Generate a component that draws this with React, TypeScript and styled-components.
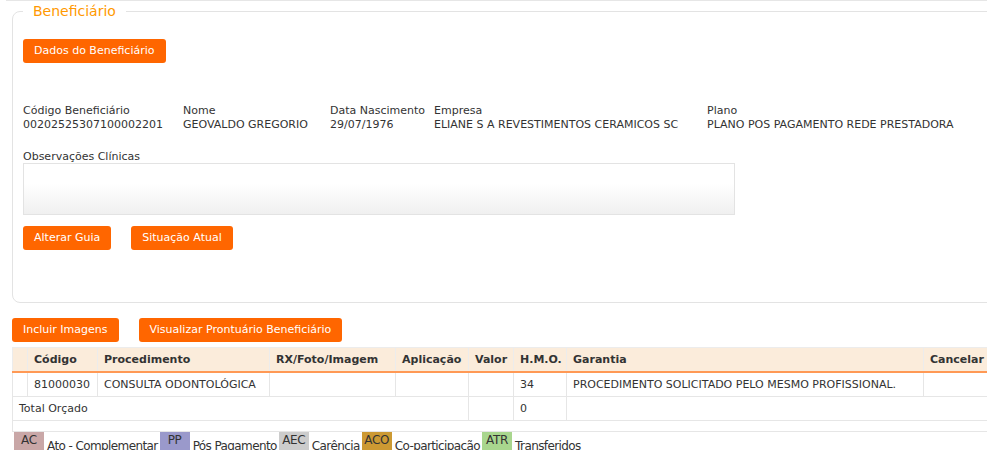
import { Fragment } from 'react'
import styled, { createGlobalStyle } from 'styled-components'

const GlobalStyle = createGlobalStyle`
  html, body {
    margin: 0;
    padding: 0;
    background: #ffffff;
    overflow: hidden;
  }
  body {
    font-family: 'DejaVu Sans', Verdana, sans-serif;
    font-size: 11px;
    color: #333333;
  }
`;

const Page = styled.div`
  width: 1010px;
`;

const PreviousPanel = styled.div`
  height: 0;
  margin-left: 6px;
  border-top: 1px solid #e6e6e6;
`;

const Fieldset = styled.fieldset`
  margin: 0 0 0 12px;
  padding: 18px 10px 52px 10px;
  border: 1px solid #e3e3e3;
  border-radius: 8px;
  min-width: 0;
`;

const Legend = styled.legend`
  padding: 0 10px;
  margin-left: 0;
  font-size: 14px;
  line-height: 20px;
  color: #ff9900;
`;

const Button = styled.button`
  height: 24px;
  padding: 0 11px;
  border: none;
  border-radius: 3px;
  background: #ff6600;
  color: #ffffff;
  font-family: 'DejaVu Sans', Verdana, sans-serif;
  font-size: 11px;
  line-height: 24px;
  cursor: pointer;
  white-space: nowrap;
`;

const ButtonRow = styled.div<{ $top?: number }>`
  display: flex;
  gap: 20px;
  margin-top: ${(p) => p.$top ?? 0}px;
`;

const InfoGrid = styled.div`
  display: grid;
  grid-template-columns: 160px 147px 104px 273px auto;
  margin-top: 41px;
  line-height: 14px;
`;

const InfoCell = styled.div`
  display: flex;
  flex-direction: column;
  white-space: nowrap;
`;

const ObsLabel = styled.div`
  margin-top: 18px;
  line-height: 13px;
`;

const ObsBox = styled.div`
  width: 710px;
  height: 50px;
  border: 1px solid #e3e3e3;
  background: linear-gradient(to bottom, #ffffff 40%, #f0f0f0 100%);
`;

const Section = styled.div`
  margin-left: 12px;
`;

const Table = styled.table`
  margin-top: 5px;
  width: 981px;
  border-collapse: collapse;
  table-layout: fixed;
`;

const HeadCell = styled.th`
  height: 23px;
  padding: 0 6px;
  text-align: left;
  font-weight: bold;
  color: #333333;
  background: #fbecdb;
  border: 1px solid #ececec;
  border-bottom: 2px solid #ff9955;
  white-space: nowrap;
  overflow: hidden;
`;

const Cell = styled.td<{ $short?: boolean }>`
  height: ${(p) => (p.$short ? 10 : 23)}px;
  padding: 0 6px;
  border: 1px solid #e6e6e6;
  white-space: nowrap;
  overflow: hidden;
`;

const LegendRow = styled.div`
  display: flex;
  align-items: flex-start;
  margin: 0 0 0 14px;
`;

const Tag = styled.span<{ $bg: string }>`
  width: 30px;
  height: 20px;
  line-height: 16px;
  text-align: center;
  font-size: 12px;
  letter-spacing: -0.3px;
  color: #333333;
  background: ${(p) => p.$bg};
`;

const TagText = styled.span`
  margin: 6px 2px 0 3px;
  font-size: 12px;
  letter-spacing: -0.6px;
  line-height: 16px;
`;

const info = [
  { label: 'Código Beneficiário', value: '00202525307100002201' },
  { label: 'Nome', value: 'GEOVALDO GREGORIO' },
  { label: 'Data Nascimento', value: '29/07/1976' },
  { label: 'Empresa', value: 'ELIANE S A REVESTIMENTOS CERAMICOS SC' },
  { label: 'Plano', value: 'PLANO POS PAGAMENTO REDE PRESTADORA' },
];

const columns = [
  { title: '', width: 15 },
  { title: 'Código', width: 70 },
  { title: 'Procedimento', width: 172 },
  { title: 'RX/Foto/Imagem', width: 126 },
  { title: 'Aplicação', width: 73 },
  { title: 'Valor', width: 45 },
  { title: 'H.M.O.', width: 53 },
  { title: 'Garantia', width: 357 },
  { title: 'Cancelar', width: 70 },
];

const tags = [
  { code: 'AC', text: 'Ato - Complementar', bg: '#c9a7a7' },
  { code: 'PP', text: 'Pós Pagamento', bg: '#9a99cb' },
  { code: 'AEC', text: 'Carência', bg: '#cccccc' },
  { code: 'ACO', text: 'Co-participação', bg: '#cc9933' },
  { code: 'ATR', text: 'Transferidos', bg: '#a9d68e' },
];

export default function App() {
  return (
    <Page>
      <GlobalStyle />
      <PreviousPanel />
      <Fieldset>
        <Legend>Beneficiário</Legend>
        <ButtonRow>
          <Button>Dados do Beneficiário</Button>
        </ButtonRow>
        <InfoGrid>
          {info.map((item) => (
            <InfoCell key={item.label}>
              <span>{item.label}</span>
              <span>{item.value}</span>
            </InfoCell>
          ))}
        </InfoGrid>
        <ObsLabel>Observações Clínicas</ObsLabel>
        <ObsBox />
        <ButtonRow $top={11}>
          <Button>Alterar Guia</Button>
          <Button>Situação Atual</Button>
        </ButtonRow>
      </Fieldset>
      <Section>
        <ButtonRow $top={15}>
          <Button>Incluir Imagens</Button>
          <Button>Visualizar Prontuário Beneficiário</Button>
        </ButtonRow>
        <Table>
          <colgroup>
            {columns.map((c, i) => (
              <col key={i} style={{ width: c.width }} />
            ))}
          </colgroup>
          <thead>
            <tr>
              {columns.map((c, i) => (
                <HeadCell key={i}>{c.title}</HeadCell>
              ))}
            </tr>
          </thead>
          <tbody>
            <tr>
              <Cell />
              <Cell>81000030</Cell>
              <Cell>CONSULTA ODONTOLÓGICA</Cell>
              <Cell />
              <Cell />
              <Cell />
              <Cell>34</Cell>
              <Cell>PROCEDIMENTO SOLICITADO PELO MESMO PROFISSIONAL.</Cell>
              <Cell />
            </tr>
            <tr>
              <Cell colSpan={5}>Total Orçado</Cell>
              <Cell />
              <Cell>0</Cell>
              <Cell colSpan={2} />
            </tr>
            <tr>
              <Cell $short colSpan={9} />
            </tr>
          </tbody>
        </Table>
      </Section>
      <LegendRow>
        {tags.map((t) => (
          <Fragment key={t.code}>
            <Tag $bg={t.bg}>{t.code}</Tag>
            <TagText>{t.text}</TagText>
          </Fragment>
        ))}
      </LegendRow>
    </Page>
  );
}
